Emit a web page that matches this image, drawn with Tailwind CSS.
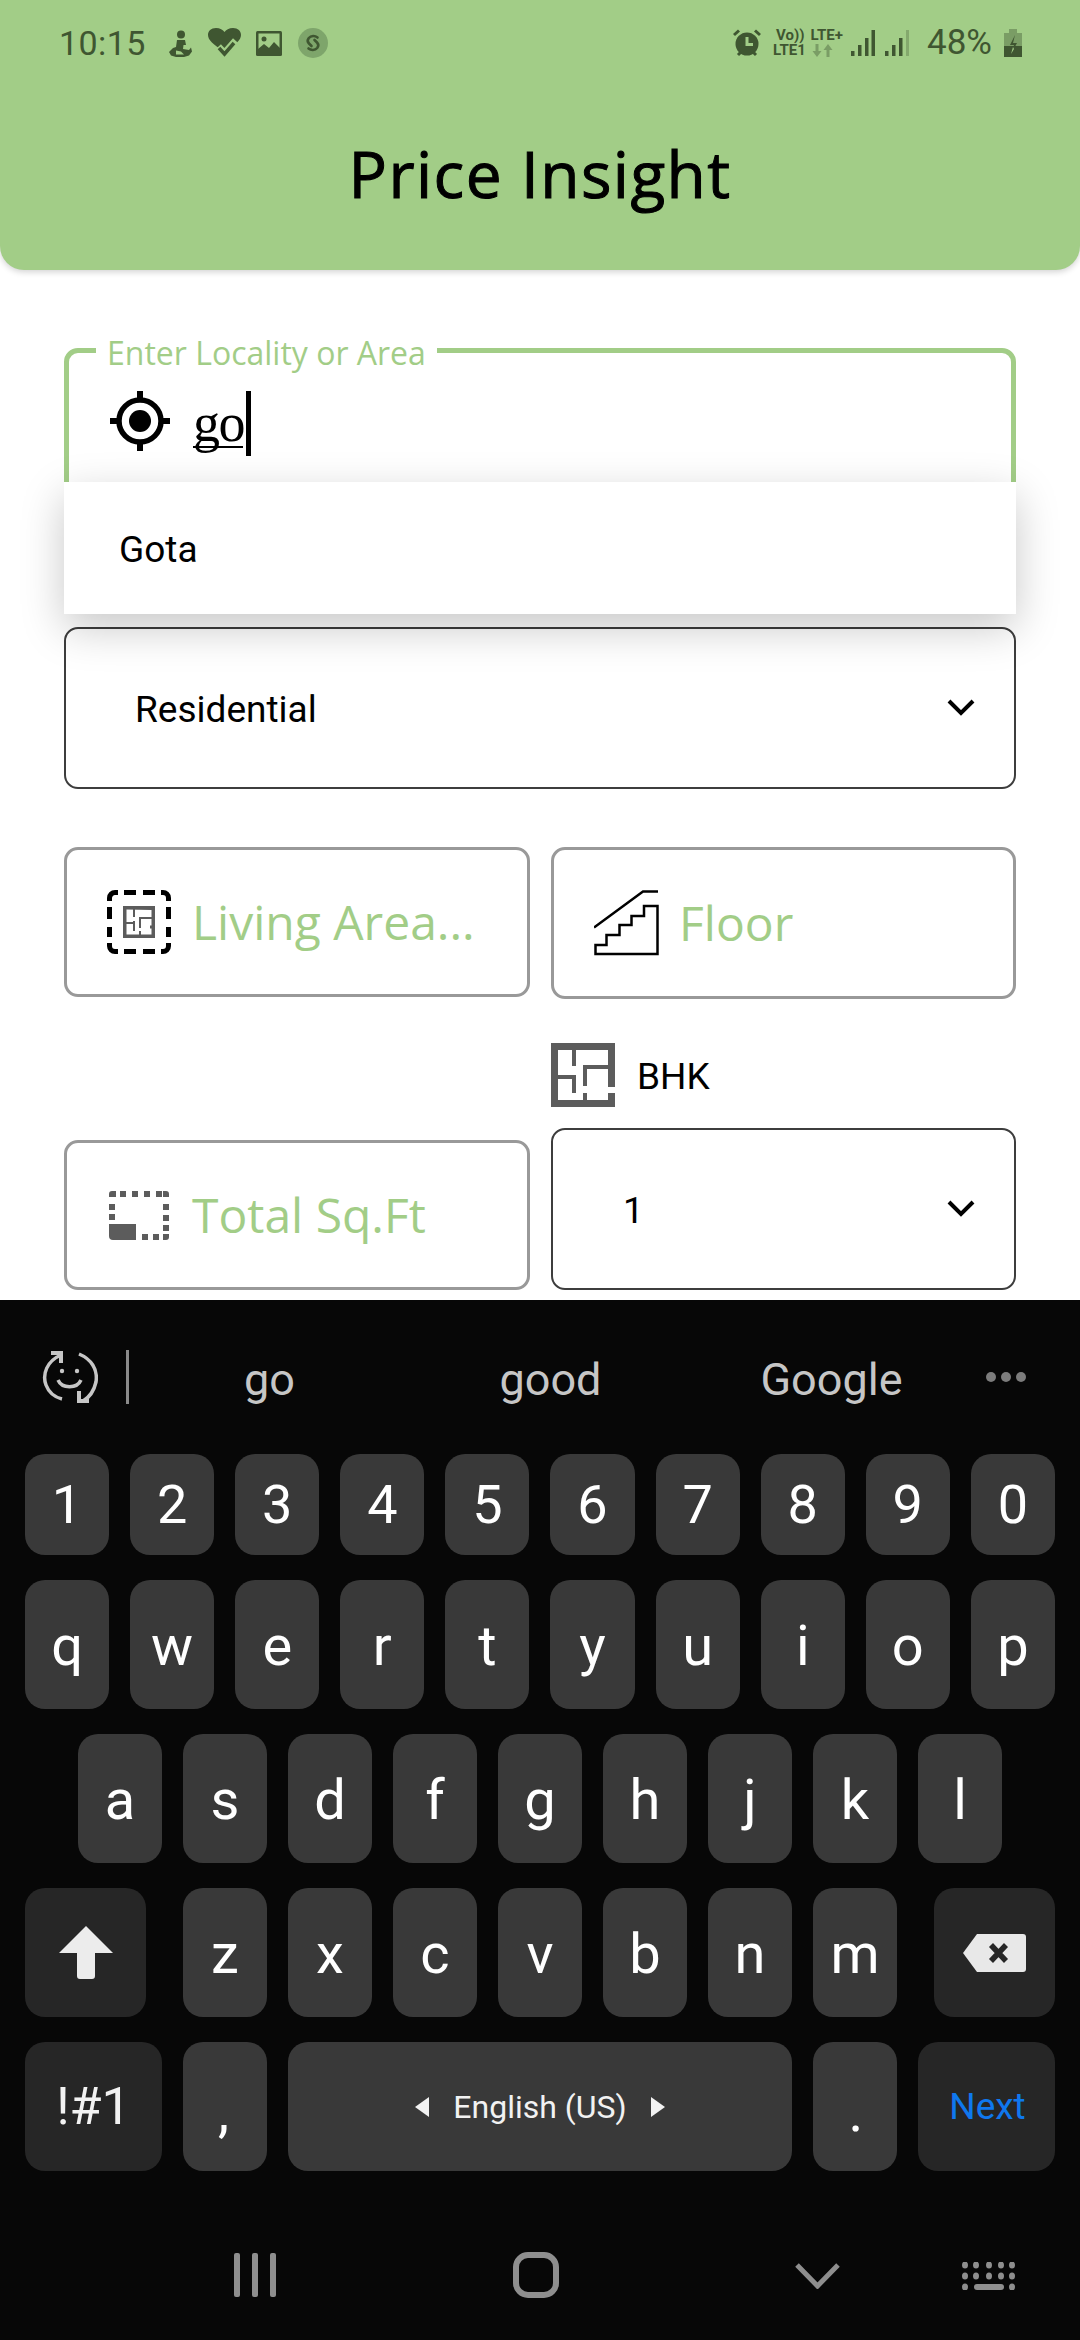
<!DOCTYPE html>
<html lang="en">
<head>
<meta charset="utf-8">
<script src="https://cdn.jsdelivr.net/npm/@tailwindcss/browser@4"></script>
<title>Price Insight</title>
</head>
<body class="m-0">
<div class="w-[1080px] h-[2340px] flex flex-col overflow-hidden bg-white font-['Roboto',sans-serif]">

  <header class="h-[270px] shrink-0 bg-[#a2cd87] rounded-b-[24px] shadow-[0_2px_6px_rgba(0,0,0,0.18)] flex flex-col relative z-20">
    <div class="h-[30px] mt-[28px] pl-[59px] pr-[58px] flex items-center justify-between text-[#3f5631]">
      <div class="flex items-center">
        <span class="text-[34px] leading-[30px] tracking-[0.4px]">10:15</span>
        <svg class="ml-[23px]" width="23" height="27" viewBox="0 0 23 27" fill="#3f5631"><circle cx="12" cy="4.500" r="4"/><path d="M8 10h8l1 5h-2.500l-.5 4 6 1 2-2.500 1 4-3 4-5 1.500H7l-5-1.500L0 22l4-4 3-1z"/><path d="M7 20.500l5 1 3 3H7z" fill="#a2cd87"/></svg>
        <svg class="ml-[16px]" width="33" height="30" viewBox="0 0 33 30"><path d="M16.500 24C5 16 0 12 0 7 0 3 3 0 8 0c4 0 7 2 8.500 4C18 2 21 0 25 0c5 0 8 3 8 7 0 5-5 9-16.500 17z" fill="#3f5631"/><path d="M10 19l6.500 7L28 13" fill="none" stroke="#a2cd87" stroke-width="8"/><path d="M11 20l5.500 6L26 15" fill="none" stroke="#3f5631" stroke-width="3.500"/></svg>
        <svg class="ml-[15px]" width="26" height="25" viewBox="0 0 26 25"><rect width="26" height="25" rx="1.500" fill="#3f5631"/><rect x="2.500" y="2.500" width="21" height="20" fill="#a2cd87"/><circle cx="8" cy="8" r="2.500" fill="#3f5631"/><path d="M2 23v-5l6-5 5 4 5-6 6 6v6z" fill="#3f5631"/></svg>
        <svg class="ml-[16px]" width="30" height="30" viewBox="0 0 30 30"><circle cx="15" cy="15" r="15" fill="#7ea56b"/><path d="M19.500 9.500C17 7.500 13 7.500 10.800 10c-1.600 2-1.300 4 .2 5.500l2.500 2.500M10.500 20.500c2.500 2 6.500 2 8.700-.5 1.600-2 1.300-4-.2-5.500L16.500 12" fill="none" stroke="#3f5631" stroke-width="2.600" stroke-linecap="round"/></svg>
      </div>
      <div class="flex items-center">
        <svg width="28" height="28" viewBox="0 0 28 28" fill="#3f5631"><circle cx="14" cy="15" r="11.500"/><path d="M1 6l5-4.500M27 6l-5-4.500M5 26l3-3M23 26l-3-3" stroke="#3f5631" stroke-width="3"/><path d="M14 8v7.500h6" fill="none" stroke="#a2cd87" stroke-width="3"/></svg>
        <div class="ml-[12px] w-[72px] flex flex-col font-bold text-[15px] leading-[15px]">
          <div class="flex pl-[3px] gap-[6px]"><span>Vo))</span><span>LTE+</span></div>
          <div class="flex items-center gap-[6px]"><span>LTE1</span><svg width="21" height="13" viewBox="0 0 21 13" fill="#3f5631" fill-opacity="0.4"><path d="M3.500 0h3v7h3l-4.500 6L.5 7h3zM14.500 13h3V6h3L16 0l-4.500 6h3z"/></svg></div>
        </div>
        <svg class="ml-[6px]" width="24" height="26" viewBox="0 0 24 26" fill="#3f5631"><rect y="21" width="3.500" height="5"/><rect x="7" y="15" width="3.500" height="11"/><rect x="14" y="8" width="3.500" height="18" /><rect x="20.500" y="0" width="3.500" height="26"/></svg>
        <svg class="ml-[10px]" width="24" height="26" viewBox="0 0 24 26" fill="#3f5631"><rect y="21" width="3.500" height="5"/><rect x="7" y="15" width="3.500" height="11"/><rect x="14" y="8" width="3.500" height="18"/><rect x="21" y="0" width="3" height="26" fill-opacity="0.3"/></svg>
        <span class="ml-[18px] text-[35px] leading-[30px]">48%</span>
        <svg class="ml-[12px]" width="18" height="28" viewBox="0 0 18 28"><path d="M5 0h8v4h5v24H0V4h5z" fill="#3f5631" fill-opacity="0.4"/><path d="M0 17h18v11H0z" fill="#3f5631"/><path d="M11 6l-5 10h4l-3 9 6-11H9z" fill="#3f5631"/><path d="M9 18l-2 7 3-5z" fill="#a2cd87"/></svg>
      </div>
    </div>
    <h1 class="m-0 mt-[72px] text-center font-['Open_Sans',sans-serif] font-normal text-[64px] leading-[88px] tracking-[1.4px] [-webkit-text-stroke:1px_#000] text-black">Price Insight</h1>
  </header>

  <main class="h-[1030px] shrink-0 relative px-[64px] pt-[78px]">
    <div class="relative h-[150px] border-[5px] border-[#a2cd87] rounded-[14px] flex items-start pl-[41px] pt-[38px]">
      <span class="absolute left-[27px] top-[-20px] bg-white px-[11px] font-['Open_Sans',sans-serif] text-[32px] leading-[40px] text-[#a2cd87]">Enter Locality or Area</span>
      <svg width="60" height="60" viewBox="0 0 60 60"><circle cx="30" cy="30" r="21" fill="none" stroke="#000" stroke-width="5.500"/><circle cx="30" cy="30" r="11" fill="#000"/><path d="M30 0v9M30 51v9M0 30h9M51 30h9" stroke="#000" stroke-width="6"/></svg>
      <div class="relative ml-[23px] mt-[-1px] h-[66px] flex items-center">
        <span class="font-['Liberation_Serif',serif] text-[54px] leading-[66px] text-black tracking-[-1.5px]">go</span>
        <span class="absolute left-0 right-[8px] bottom-[8px] h-[2px] bg-black"></span>
        <span class="w-[5px] h-[65px] bg-black ml-[2px]"></span>
      </div>
    </div>

    <div class="absolute z-10 left-[64px] right-[64px] top-[212px] h-[132px] bg-white shadow-[0_14px_44px_rgba(0,0,0,0.22)] flex items-center pl-[55px]">
      <span class="text-[37px] leading-[44px] text-black mt-[3px]">Gota</span>
    </div>

    <div class="mt-[129px] h-[162px] border-2 border-[#3d3d3d] rounded-[14px] flex items-center justify-between pl-[69px] pr-[39px]">
      <span class="text-[37px] leading-[44px] text-black mt-[3px]">Residential</span>
      <svg class="mb-[2px]" width="28" height="18" viewBox="0 0 28 18"><path d="M2 3l12 12L26 3" fill="none" stroke="#000" stroke-width="4"/></svg>
    </div>

    <div class="grid grid-cols-[466px_465px] gap-x-[21px] mt-[58px]">
      <div class="h-[150px] border-[3px] border-[#999999] rounded-[14px] flex items-center pl-[40px]">
        <svg width="64" height="64" viewBox="0 0 64 64" class="shrink-0"><path d="M2.500 11V8a5.500 5.500 0 0 1 5.500-5.500h3M17 2.500h12M36 2.500h12M54 2.500h2a5.500 5.500 0 0 1 5.500 5.500v3M61.500 17v12M61.500 37v10M61.500 53v3a5.500 5.500 0 0 1-5.500 5.500h-2M48 61.500H36M29 61.500H17M11 61.500H8a5.500 5.500 0 0 1-5.500-5.500v-3M2.500 47V37M2.500 29V17" fill="none" stroke="#000" stroke-width="5"/><g fill="#5c5c5c"><path d="M16 16h32v32H16zM19.500 19.500v25h25v-6h-1.500v-3h1.500v-15.500z" fill-rule="evenodd"/><rect x="26" y="19" width="2" height="8"/><rect x="26" y="31" width="2" height="10"/><rect x="19" y="32" width="9" height="2"/><rect x="32" y="27" width="13" height="2"/><rect x="32" y="27" width="2" height="11"/><rect x="32" y="41" width="2" height="4"/></g></svg>
        <span class="ml-[21px] font-['Open_Sans',sans-serif] text-[48px] leading-[64px] text-[#a2cd87] whitespace-nowrap mt-[-1px]">Living Area...</span>
      </div>
      <div class="h-[152px] border-[3px] border-[#999999] rounded-[14px] flex items-center pl-[40px]">
        <svg width="66" height="66" viewBox="0 0 66 66" class="shrink-0"><path d="M0 37.500L49 1.500h15M1.500 55h11V45h13V35h12V26h12.500V16h13.500v48H1.500z" fill="none" stroke="#000" stroke-width="2.500"/></svg>
        <span class="ml-[19px] font-['Open_Sans',sans-serif] text-[48px] leading-[64px] text-[#a2cd87] mt-[-1px]">Floor</span>
      </div>
      <div class="self-end h-[150px] border-[3px] border-[#999999] rounded-[14px] flex items-center pl-[42px]">
        <svg width="60" height="49" viewBox="0 0 60 49" class="shrink-0" fill="#5c5c5c"><path d="M0 6V3a3 3 0 0 1 3-3h4v6zM11 0h6v6h-6zM23 0h6v6h-6zM35 0h6v6h-6zM47 0h6v6h-6zM54 0h3a3 3 0 0 1 3 3v3h-6zM0 13h6v6H0zM0 23h6v6H0zM54 13h6v6h-6zM54 24h6v6h-6zM54 34h6v6h-6zM0 33h27v16H4a4 4 0 0 1-4-4zM33 43h6v6h-6zM44 43h6v6h-6zM54 43h6v3a3 3 0 0 1-3 3h-3z"/></svg>
        <span class="ml-[23px] font-['Open_Sans',sans-serif] text-[48px] leading-[64px] text-[#a2cd87] whitespace-nowrap mt-[-1px]">Total Sq.Ft</span>
      </div>
      <div class="flex flex-col mt-[44px]">
        <div class="flex items-center h-[64px]">
          <svg width="64" height="64" viewBox="0 0 64 64" fill="#5c5c5c" class="shrink-0"><path d="M0 0h64v44h-7V7H7v50h50v-7h7v14H0z"/><rect x="21" y="7" width="4" height="16"/><rect x="21" y="32" width="4" height="18"/><rect x="7" y="32" width="18" height="4"/><rect x="32" y="22" width="25" height="4"/><rect x="32" y="22" width="4" height="21"/><rect x="32" y="50" width="4" height="7"/></svg>
          <span class="ml-[22px] text-[37px] leading-[44px] text-black mt-[3px]">BHK</span>
        </div>
        <div class="mt-[21px] h-[162px] border-2 border-[#3d3d3d] rounded-[14px] flex items-center justify-between pl-[70px] pr-[39px]">
          <span class="text-[37px] leading-[44px] text-black mt-[3px]">1</span>
          <svg class="mb-[2px]" width="28" height="18" viewBox="0 0 28 18"><path d="M2 3l12 12L26 3" fill="none" stroke="#000" stroke-width="4"/></svg>
        </div>
      </div>
    </div>
  </main>

  <section class="flex-1 bg-[#070707] flex flex-col">
    <div class="h-[154px] flex items-start pt-[50px] pl-[42px]">
      <svg width="56" height="54" viewBox="0 0 56 54" class="shrink-0"><g fill="none" stroke="#c6c6c6" stroke-width="3.500"><path d="M19 5C5 11 0 24 4 35c3 8 8 12 16 14"/><path d="M37 4c12 5 19 15 17 28-2 9-6 15-13 19"/><path d="M16 30c4 9 19 9 23 0"/></g><g fill="#c6c6c6"><path d="M9 1h12v12h-4V5H9zM35 53V41h4v8h8v4z"/><circle cx="20" cy="21" r="2.200"/><circle cx="35" cy="21" r="2.200"/></g></svg>
      <div class="ml-[28px] w-[3px] h-[54px] bg-[#8a8a8a] shrink-0"></div>
      <div class="w-[281px] mt-[3px] text-center text-[45px] leading-[54px] text-[#c6c6c6]">go</div>
      <div class="w-[281px] mt-[3px] text-center text-[45px] leading-[54px] text-[#c6c6c6]">good</div>
      <div class="w-[281px] mt-[3px] text-center text-[45px] leading-[54px] text-[#c6c6c6]">Google</div>
      <div class="ml-[14px] mt-[22px] flex gap-[5px]"><span class="w-[10px] h-[10px] rounded-full bg-[#7c7c7c]"></span><span class="w-[10px] h-[10px] rounded-full bg-[#7c7c7c]"></span><span class="w-[10px] h-[10px] rounded-full bg-[#7c7c7c]"></span></div>
    </div>

    <div class="flex flex-col gap-[25px] text-white text-[56px] leading-[60px]">
      <div class="flex gap-[21px] px-[25px] text-[54px]">
        <div class="flex-1 h-[101px] rounded-[20px] bg-[#393939] flex items-center justify-center">1</div>
        <div class="flex-1 h-[101px] rounded-[20px] bg-[#393939] flex items-center justify-center">2</div>
        <div class="flex-1 h-[101px] rounded-[20px] bg-[#393939] flex items-center justify-center">3</div>
        <div class="flex-1 h-[101px] rounded-[20px] bg-[#393939] flex items-center justify-center">4</div>
        <div class="flex-1 h-[101px] rounded-[20px] bg-[#393939] flex items-center justify-center">5</div>
        <div class="flex-1 h-[101px] rounded-[20px] bg-[#393939] flex items-center justify-center">6</div>
        <div class="flex-1 h-[101px] rounded-[20px] bg-[#393939] flex items-center justify-center">7</div>
        <div class="flex-1 h-[101px] rounded-[20px] bg-[#393939] flex items-center justify-center">8</div>
        <div class="flex-1 h-[101px] rounded-[20px] bg-[#393939] flex items-center justify-center">9</div>
        <div class="flex-1 h-[101px] rounded-[20px] bg-[#393939] flex items-center justify-center">0</div>
      </div>
      <div class="flex gap-[21px] px-[25px]">
        <div class="flex-1 h-[129px] rounded-[20px] bg-[#393939] flex items-center justify-center pt-[3px]">q</div>
        <div class="flex-1 h-[129px] rounded-[20px] bg-[#393939] flex items-center justify-center pt-[3px]">w</div>
        <div class="flex-1 h-[129px] rounded-[20px] bg-[#393939] flex items-center justify-center pt-[3px]">e</div>
        <div class="flex-1 h-[129px] rounded-[20px] bg-[#393939] flex items-center justify-center pt-[3px]">r</div>
        <div class="flex-1 h-[129px] rounded-[20px] bg-[#393939] flex items-center justify-center pt-[3px]">t</div>
        <div class="flex-1 h-[129px] rounded-[20px] bg-[#393939] flex items-center justify-center pt-[3px]">y</div>
        <div class="flex-1 h-[129px] rounded-[20px] bg-[#393939] flex items-center justify-center pt-[3px]">u</div>
        <div class="flex-1 h-[129px] rounded-[20px] bg-[#393939] flex items-center justify-center pt-[3px]">i</div>
        <div class="flex-1 h-[129px] rounded-[20px] bg-[#393939] flex items-center justify-center pt-[3px]">o</div>
        <div class="flex-1 h-[129px] rounded-[20px] bg-[#393939] flex items-center justify-center pt-[3px]">p</div>
      </div>
      <div class="flex gap-[21px] px-[78px]">
        <div class="flex-1 h-[129px] rounded-[20px] bg-[#393939] flex items-center justify-center pt-[3px]">a</div>
        <div class="flex-1 h-[129px] rounded-[20px] bg-[#393939] flex items-center justify-center pt-[3px]">s</div>
        <div class="flex-1 h-[129px] rounded-[20px] bg-[#393939] flex items-center justify-center pt-[3px]">d</div>
        <div class="flex-1 h-[129px] rounded-[20px] bg-[#393939] flex items-center justify-center pt-[3px]">f</div>
        <div class="flex-1 h-[129px] rounded-[20px] bg-[#393939] flex items-center justify-center pt-[3px]">g</div>
        <div class="flex-1 h-[129px] rounded-[20px] bg-[#393939] flex items-center justify-center pt-[3px]">h</div>
        <div class="flex-1 h-[129px] rounded-[20px] bg-[#393939] flex items-center justify-center pt-[3px]">j</div>
        <div class="flex-1 h-[129px] rounded-[20px] bg-[#393939] flex items-center justify-center pt-[3px]">k</div>
        <div class="flex-1 h-[129px] rounded-[20px] bg-[#393939] flex items-center justify-center pt-[3px]">l</div>
      </div>
      <div class="flex gap-[21px] px-[25px]">
        <div class="w-[121px] mr-[16px] h-[129px] rounded-[20px] bg-[#262626] flex items-center justify-center">
          <svg width="54" height="53" viewBox="0 0 54 53"><path d="M27 0l27 27H36v23a3 3 0 0 1-3 3H21a3 3 0 0 1-3-3V27H0z" fill="#ececec"/></svg>
        </div>
        <div class="flex-1 h-[129px] rounded-[20px] bg-[#393939] flex items-center justify-center pt-[3px]">z</div>
        <div class="flex-1 h-[129px] rounded-[20px] bg-[#393939] flex items-center justify-center pt-[3px]">x</div>
        <div class="flex-1 h-[129px] rounded-[20px] bg-[#393939] flex items-center justify-center pt-[3px]">c</div>
        <div class="flex-1 h-[129px] rounded-[20px] bg-[#393939] flex items-center justify-center pt-[3px]">v</div>
        <div class="flex-1 h-[129px] rounded-[20px] bg-[#393939] flex items-center justify-center pt-[3px]">b</div>
        <div class="flex-1 h-[129px] rounded-[20px] bg-[#393939] flex items-center justify-center pt-[3px]">n</div>
        <div class="flex-1 h-[129px] rounded-[20px] bg-[#393939] flex items-center justify-center pt-[3px]">m</div>
        <div class="w-[121px] ml-[16px] h-[129px] rounded-[20px] bg-[#262626] flex items-center justify-center">
          <svg width="63" height="38" viewBox="0 0 63 38"><path d="M14 0h46a3 3 0 0 1 3 3v32a3 3 0 0 1-3 3H14L0 19z" fill="#e8e8e8"/><path d="M28 11l15 16M43 11L28 27" stroke="#262626" stroke-width="5.500"/></svg>
        </div>
      </div>
      <div class="flex gap-[21px] px-[25px]">
        <div class="w-[137px] h-[129px] rounded-[20px] bg-[#262626] flex items-center justify-center text-[52px] text-[#f2f2f2]">!#1</div>
        <div class="w-[84px] h-[129px] rounded-[20px] bg-[#393939] flex items-center justify-center pt-[10px] pr-[3px]">,</div>
        <div class="w-[504px] h-[129px] rounded-[20px] bg-[#393939] flex items-center justify-center text-[32px] leading-[40px]">
          <svg width="14" height="20" viewBox="0 0 14 20"><path d="M14 0v20L0 10z" fill="#f2f2f2"/></svg>
          <span class="mx-[24px] text-[#f2f2f2]">English (US)</span>
          <svg width="14" height="20" viewBox="0 0 14 20"><path d="M0 0v20l14-10z" fill="#f2f2f2"/></svg>
        </div>
        <div class="w-[84px] h-[129px] rounded-[20px] bg-[#393939] flex items-center justify-center pt-[10px] pl-[2px]">.</div>
        <div class="w-[137px] h-[129px] rounded-[20px] bg-[#262626] flex items-center justify-center pl-[2px] text-[37px] leading-[44px] text-[#0f78ee]">Next</div>
      </div>
    </div>

    <nav class="relative flex-1">
      <div class="absolute left-[234px] top-[82px] w-[42px] h-[44px] flex justify-between">
        <span class="w-[6px] h-[44px] rounded-[2px] bg-[#8e8e8e]"></span><span class="w-[6px] h-[44px] rounded-[2px] bg-[#8e8e8e]"></span><span class="w-[6px] h-[44px] rounded-[2px] bg-[#8e8e8e]"></span>
      </div>
      <div class="absolute left-[513px] top-[81px] w-[46px] h-[46px] rounded-[15px] border-[6px] border-[#8e8e8e]"></div>
      <svg class="absolute left-[795px] top-[92px]" width="45" height="26" viewBox="0 0 45 26"><path d="M2 2l20.500 21L43 2" fill="none" stroke="#8e8e8e" stroke-width="5"/></svg>
      <svg class="absolute left-[962px] top-[91px]" width="54" height="28" viewBox="0 0 54 28" fill="#8e8e8e"><ellipse cx="3" cy="3" rx="3" ry="3.500"/><ellipse cx="14" cy="3" rx="3" ry="3.500"/><ellipse cx="27" cy="3" rx="3" ry="3.500"/><ellipse cx="39" cy="3" rx="3" ry="3.500"/><ellipse cx="50" cy="3" rx="3" ry="3.500"/><ellipse cx="3" cy="14" rx="3" ry="3.500"/><ellipse cx="14" cy="14" rx="3" ry="3.500"/><ellipse cx="27" cy="14" rx="3" ry="3.500"/><ellipse cx="39" cy="14" rx="3" ry="3.500"/><ellipse cx="50" cy="14" rx="3" ry="3.500"/><ellipse cx="3" cy="25" rx="3" ry="3.500"/><rect x="12" y="22" width="30" height="6" rx="3"/><ellipse cx="50" cy="25" rx="3" ry="3.500"/></svg>
    </nav>
  </section>
</div>
</body>
</html>
